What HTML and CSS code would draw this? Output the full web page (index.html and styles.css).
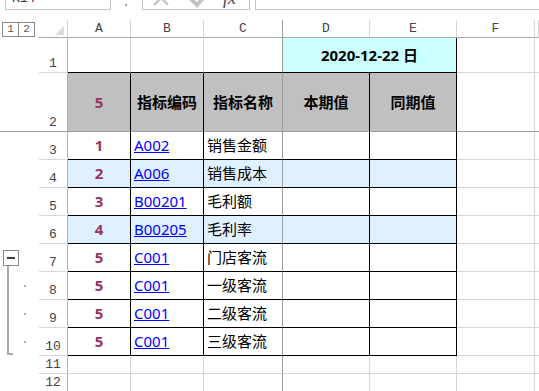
FILE: index.html
```html
<!DOCTYPE html>
<html lang="zh-CN">
<head>
    <meta charset="UTF-8">
    <meta name="viewport" content="width=device-width, initial-scale=1.0">
    <title>指标表</title>
    <link rel="stylesheet" href="styles.css">
</head>
<body>
    <!-- formula bar, mostly scrolled out of view -->
    <div class="formula-bar">
        <div class="name-box">K14</div>
        <div class="bar-dot"></div>
        <div class="fx-box">
            <svg class="fx-icons" width="70" height="24" viewBox="0 0 70 24">
                <path d="M11 5 L25 19 M25 5 L11 19" stroke="#c4c4c4" stroke-width="2.2" fill="none"/>
                <path d="M46 11 L54 19 L62 10" stroke="#c4c4c4" stroke-width="4" fill="none"/>
            </svg>
            <span class="fx">fx</span>
        </div>
        <div class="formula-input"></div>
    </div>

    <div class="sheet">
        <div class="row head">
            <div class="ol levels"><span class="lvl">1</span><span class="lvl">2</span></div>
            <div class="rh corner"><span class="tri"></span></div>
            <div class="ch">A</div>
            <div class="ch">B</div>
            <div class="ch frz">C</div>
            <div class="ch">D</div>
            <div class="ch">E</div>
            <div class="ch">F</div>
            <div class="ch"></div>
        </div>

        <div class="row r1">
            <div class="ol"></div><div class="rh">1</div>
            <div class="c top"></div>
            <div class="c top"></div>
            <div class="c top frz"></div>
            <div class="c date">2020-12-22 日</div>
            <div class="c"></div><div class="c"></div>
        </div>

        <div class="row r2 freeze">
            <div class="ol"></div><div class="rh">2</div>
            <div class="c th lv">5</div>
            <div class="c th">指标编码</div>
            <div class="c th frz">指标名称</div>
            <div class="c th">本期值</div>
            <div class="c th">同期值</div>
            <div class="c"></div><div class="c"></div>
        </div>

        <div class="row">
            <div class="ol"></div><div class="rh">3</div>
            <div class="c t lv">1</div>
            <div class="c t"><a href="#">A002</a></div>
            <div class="c t frz">销售金额</div>
            <div class="c t"></div><div class="c t"></div>
            <div class="c"></div><div class="c"></div>
        </div>

        <div class="row alt">
            <div class="ol"></div><div class="rh">4</div>
            <div class="c t lv">2</div>
            <div class="c t"><a href="#">A006</a></div>
            <div class="c t frz">销售成本</div>
            <div class="c t"></div><div class="c t"></div>
            <div class="c"></div><div class="c"></div>
        </div>

        <div class="row">
            <div class="ol"></div><div class="rh">5</div>
            <div class="c t lv">3</div>
            <div class="c t"><a href="#">B00201</a></div>
            <div class="c t frz">毛利额</div>
            <div class="c t"></div><div class="c t"></div>
            <div class="c"></div><div class="c"></div>
        </div>

        <div class="row alt">
            <div class="ol"></div><div class="rh">6</div>
            <div class="c t lv">4</div>
            <div class="c t"><a href="#">B00205</a></div>
            <div class="c t frz">毛利率</div>
            <div class="c t"></div><div class="c t"></div>
            <div class="c"></div><div class="c"></div>
        </div>

        <div class="row">
            <div class="ol grp-start"><span class="minus"></span><span class="grp-line"></span></div>
            <div class="rh">7</div>
            <div class="c t lv">5</div>
            <div class="c t"><a href="#">C001</a></div>
            <div class="c t frz">门店客流</div>
            <div class="c t"></div><div class="c t"></div>
            <div class="c"></div><div class="c"></div>
        </div>

        <div class="row">
            <div class="ol grp"><span class="grp-line"></span><span class="grp-dot"></span></div>
            <div class="rh">8</div>
            <div class="c t lv">5</div>
            <div class="c t"><a href="#">C001</a></div>
            <div class="c t frz">一级客流</div>
            <div class="c t"></div><div class="c t"></div>
            <div class="c"></div><div class="c"></div>
        </div>

        <div class="row">
            <div class="ol grp"><span class="grp-line"></span><span class="grp-dot"></span></div>
            <div class="rh">9</div>
            <div class="c t lv">5</div>
            <div class="c t"><a href="#">C001</a></div>
            <div class="c t frz">二级客流</div>
            <div class="c t"></div><div class="c t"></div>
            <div class="c"></div><div class="c"></div>
        </div>

        <div class="row">
            <div class="ol grp"><span class="grp-line end"></span><span class="grp-dot"></span></div>
            <div class="rh">10</div>
            <div class="c t lv">5</div>
            <div class="c t"><a href="#">C001</a></div>
            <div class="c t frz">三级客流</div>
            <div class="c t"></div><div class="c t"></div>
            <div class="c"></div><div class="c"></div>
        </div>

        <div class="row short">
            <div class="ol"></div><div class="rh">11</div>
            <div class="c"></div><div class="c"></div><div class="c frz"></div>
            <div class="c"></div><div class="c"></div><div class="c"></div><div class="c"></div>
        </div>

        <div class="row short">
            <div class="ol"></div><div class="rh">12</div>
            <div class="c"></div><div class="c"></div><div class="c frz"></div>
            <div class="c"></div><div class="c"></div><div class="c"></div><div class="c"></div>
        </div>
    </div>
</body>
</html>
```

FILE: styles.css
```css
/* Global */
* {
    box-sizing: border-box;
}

body {
    margin: 0;
    background: #ffffff;
    color: #000000;
    font-family: "Noto Sans", "Noto Sans CJK SC", sans-serif;
    font-size: 15px;
    overflow: hidden;
}

/* Formula bar */
.formula-bar {
    display: flex;
    align-items: flex-end;
    height: 10px;
    overflow: hidden;
}

.name-box {
    flex: none;
    width: 106px;
    height: 24px;
    margin-left: 5px;
    padding: 4px 0 0 6px;
    border: 1px solid #c6c6c6;
    font: 13px "Liberation Mono", monospace;
    color: #333333;
}

.bar-dot {
    flex: none;
    width: 2px;
    height: 2px;
    margin: 0 0 4px 14px;
    background: #a0a0a0;
}

.fx-box {
    flex: none;
    display: flex;
    align-items: center;
    width: 108px;
    height: 24px;
    margin-left: 15px;
    padding-left: 0;
    border: 1px solid #c6c6c6;
}

.fx-icons {
    flex: none;
    margin-left: 0;
}

.fx {
    margin-left: 10px;
    font: italic 18px "Liberation Serif", serif;
    color: #444444;
}

.formula-input {
    flex: 1;
    height: 24px;
    margin-left: 5px;
    border: 1px solid #c6c6c6;
    border-right: none;
}

/* Sheet grid */
.sheet {
    margin-top: 10px;
}

.row {
    display: grid;
    grid-template-columns: 39px 29px 63px 73px 79px 87px 87px 78px 1fr;
    height: 28px;
}

.row.head {
    height: 18px;
}

.row.r1 {
    height: 35px;
}

.row.r2 {
    height: 59px;
}

.row.short {
    height: 18px;
}

/* outline column */
.ol {
    display: flex;
}

.levels {
    align-items: center;
    padding-left: 2px;
}

.lvl {
    width: 17px;
    height: 15px;
    border: 1px solid #8a8a8a;
    font: 11px/13px "Liberation Mono", monospace;
    color: #555555;
    text-align: center;
}

.lvl + .lvl {
    border-left: none;
    width: 16px;
}

.grp-start {
    flex-direction: column;
    padding: 6px 0 0 3px;
}

.minus {
    display: flex;
    align-items: center;
    justify-content: center;
    width: 16px;
    height: 16px;
    border: 1px solid #8c8c8c;
}

.minus::after {
    content: "";
    width: 8px;
    height: 2px;
    background: #404040;
}

.grp-start .grp-line {
    flex: 1;
    margin-left: 4px;
}

.grp-line {
    width: 2px;
    background: #a8a8a8;
}

.grp {
    align-items: center;
    padding-left: 7px;
}

.grp .grp-line {
    align-self: stretch;
}

.grp .grp-line.end {
    width: 6px;
    margin-bottom: 1px;
    background: none;
    border-left: 2px solid #a8a8a8;
    border-bottom: 2px solid #a8a8a8;
}

.grp-dot {
    width: 2px;
    height: 2px;
    margin-left: 15px;
    background: #a8a8a8;
}

.grp .grp-line.end + .grp-dot {
    margin-left: 11px;
}

/* row / column headers */
.rh {
    display: flex;
    align-items: flex-end;
    justify-content: center;
    padding-bottom: 2px;
    border-right: 1px solid #b4b4b4;
    border-bottom: 1px solid #d6d6d6;
    font: 13px/1 "Liberation Mono", monospace;
    color: #444444;
}

.corner {
    justify-content: flex-end;
    padding: 0 3px 2px 0;
    border-right-color: #d6d6d6;
    border-bottom-color: #a6a6a6;
}

.tri {
    width: 0;
    height: 0;
    border-left: 9px solid transparent;
    border-bottom: 9px solid #dcdcdc;
}

.ch {
    display: flex;
    align-items: center;
    justify-content: center;
    border-right: 1px solid #d6d6d6;
    border-bottom: 1px solid #a6a6a6;
    font: 13px/1 "Liberation Mono", monospace;
    color: #444444;
}

/* cells */
.c {
    display: flex;
    align-items: center;
    padding: 0 3px;
    border-right: 1px solid #d6d6d6;
    border-bottom: 1px solid #d6d6d6;
    white-space: nowrap;
    line-height: 1;
}

.c.top {
    border-bottom-color: #000000;
}

.c.date {
    grid-column: span 2;
    justify-content: center;
    background: #ccffff;
    border-right-color: #000000;
    border-bottom-color: #000000;
    font-weight: bold;
}

.c.th {
    justify-content: center;
    background: #c0c0c0;
    border-right-color: #000000;
    font-weight: bold;
}

.c.t {
    border-right-color: #000000;
    border-bottom-color: #000000;
}

.alt .c.t {
    background: #dff0ff;
}

.c.lv {
    justify-content: center;
    color: #993366;
    font-weight: bold;
}

.c a {
    color: #0000ff;
    text-decoration: underline;
}

/* frozen pane lines */
.row .frz {
    border-right-color: #9c9c9c;
}

.freeze > div {
    border-bottom: 1px solid #9c9c9c;
}
```
